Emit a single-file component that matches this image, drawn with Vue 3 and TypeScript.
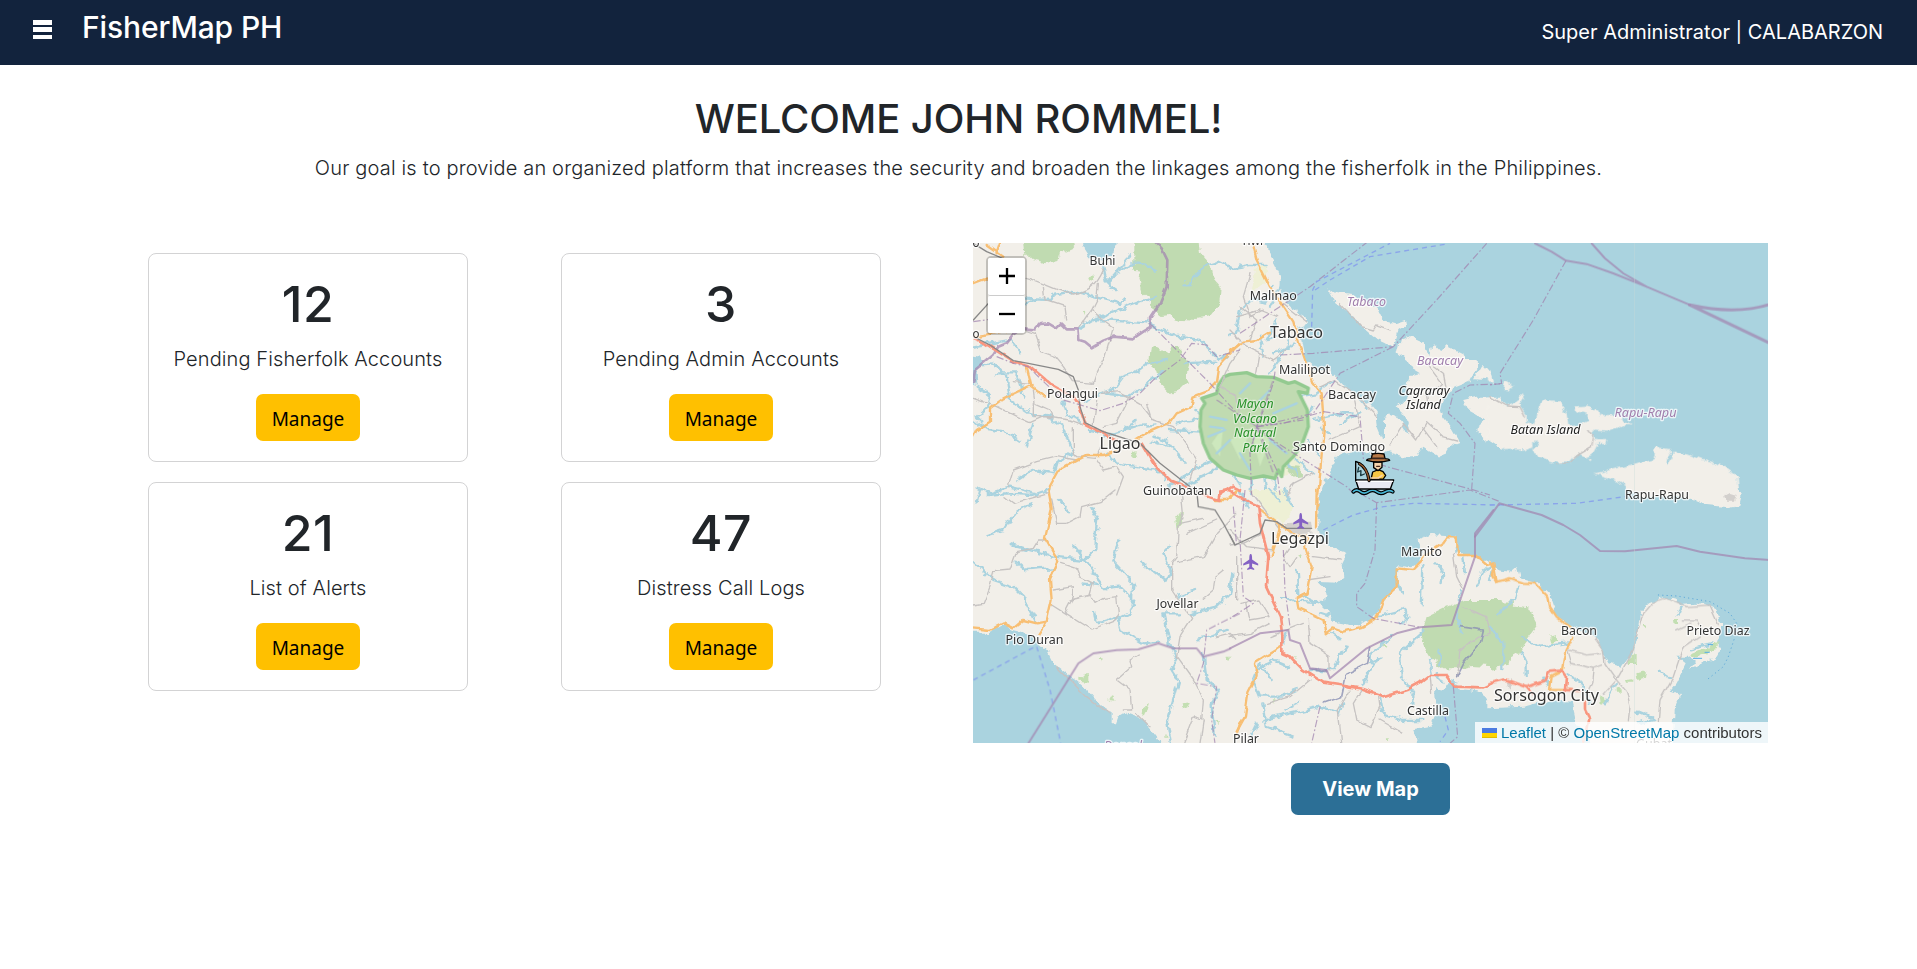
<script setup lang="ts">
interface Stat { count: number; label: string }
interface Feature { kind: string; d: string }
interface Sheet { x: number; y: number; land: string; features: Feature[] }
interface Label { text: string; x: number; y: number; w: number; size: number; tone?: string }

const stats: Stat[] = [
  { count: 12, label: 'Pending Fisherfolk Accounts' },
  { count: 3, label: 'Pending Admin Accounts' },
  { count: 21, label: 'List of Alerts' },
  { count: 47, label: 'Distress Call Logs' },
]

// The map is split in six sheets; path units are a third of a map pixel.
const sheets: Sheet[] = [
  {
    x: 970, y: 240,
    land: 'M0 0H810V770H0Z',
    features: [
      { kind: 'lake', d: 'M338 0H440L438 40 425 52 405 48 400 75 392 52 355 48 342 28ZM0 345 30 350 38 375 20 400 22 435 0 430Z' },
      { kind: 'park', d: 'M162 0H325L305 25 270 40 265 60 225 70 185 60 165 40ZM493 0H685L690 40 730 90 735 120 752 140 748 190 720 225 690 230 680 243 630 240 600 225 575 228 545 205 540 175 515 155 505 120 510 95 493 92ZM540 320 575 330 590 340 605 322 632 320 635 345 655 375 645 410 655 425 625 455 600 460 580 440 570 430 562 390 535 365Z' },
      { kind: 'scrub', d: 'M355 115 368 100 370 115 358 122ZM335 220 343 218 340 230ZM488 645 498 640 502 650 490 653Z' },
      { kind: 'minor', d: 'M165 112C230 130 270 160 310 162 350 155 380 140 400 90M385 130 380 180 365 210 400 240 430 262 405 350 380 400 370 430 310 425 280 380 255 350 215 335 195 280 165 270M220 140 225 180 285 200 290 240M10 475 80 500 140 530 180 548 220 530 300 540 340 555M395 460 450 455 510 490 550 540 610 560 640 600 680 655 660 720M380 480 370 550M190 450 195 490 240 510 245 530 190 530 190 490M130 425 180 430M310 560 310 640 320 650 375 655 390 620M320 660 260 650 200 665 130 690 115 740M380 660 400 690 440 680 460 710 440 765M480 470 440 550 400 560M750 440 800 470 810 540M545 540 530 490M365 210 330 260M810 330 780 370 750 440' },
      { kind: 'river', d: 'M165 190 200 178 240 180 250 165 300 155 350 165 390 175 450 190 465 175M330 265 380 235 430 215 500 190 555 170M400 80 410 130 440 150M410 130 440 95 490 70 540 75 555 95M440 95 470 60 480 40M380 240 470 245 530 250 620 290 690 300 750 360 770 345M640 130 665 130 700 80 750 65 790 85 810 75M10 375 70 370 110 410 120 480 180 520 240 530 280 560 310 640 260 665 250 700 190 690 145 720M75 400 140 400 160 470M10 540 50 570 120 580 155 605M370 470 430 450 460 410 490 400 530 370 590 360M345 485 400 460 480 470 530 430 580 390M280 485 290 520 330 545M360 570 430 580 510 555 560 550M400 590 460 570 500 540M550 590 590 600 610 630 645 665M545 605 610 625M410 640 440 670 490 680 560 690 590 720M20 440 60 465 50 500 20 530 40 550M190 550 170 620M150 340 120 300 10 320M20 740 60 760 120 740 200 760M640 370 740 365M130 170 200 180M670 510 740 545 790 545M620 550 680 540M600 570 690 575' },
      { kind: 'fat', d: 'M600 740 670 690 750 650 790 600M640 740 720 700 800 620' },
      { kind: 'ridge', d: 'M10 425 15 390 70 345 85 320 110 310 130 285 160 265 195 268 210 252 235 250 260 265 275 250 290 265 325 265 328 300 345 305 365 322 400 302 430 290 490 295 520 275 545 260 540 235 570 190 590 140 592 60 575 25 550 0' },
      { kind: 'admin', d: 'M545 255 600 310 720 430 810 530M80 350 130 370 175 380 210 415 280 480 390 512 460 490 510 460 550 420 630 360 665 310 710 315 740 350 810 330M10 245 80 235 160 260' },
      { kind: 'primary', d: 'M810 310 790 330 745 380 738 425 710 455 670 470 665 500 620 520 600 548 540 575 500 600M440 635 400 645 350 645 320 660 265 690 240 735 235 765M170 375 185 440 225 470M185 435 100 475 60 505 60 545 20 570 10 590M50 15 100 50M80 40 90 10M10 130 50 115 70 120M10 290 70 280 120 270' },
      { kind: 'trunk', d: 'M10 295 45 310 130 365 175 375 240 430 310 470 325 490 345 550 440 600M515 610 550 670 600 720 650 740M750 765 790 740 810 750' },
      { kind: 'rail', d: 'M10 10 50 35 110 60M10 240 60 185M10 290 60 315 130 362 175 370 265 388 310 410 325 450 330 500 345 548 400 575 510 610 570 670 660 740' },
    ],
  },
  {
    x: 1230, y: 240,
    land: 'M0 0H106L122 50 135 75 150 105 148 140 165 185 190 208 228 230 235 250 205 262 215 290 225 340 238 370 262 390 300 392 325 415 350 445 378 465 415 488 440 520 443 560 455 590 480 605 490 635 450 645 400 630 340 638 320 650 300 690 285 730 270 770H0ZM292 142 320 160 370 165 440 200 460 240 495 250 525 240 528 255 505 270 500 290 490 320 465 305 430 290 400 265 370 230 340 205 320 190ZM462 545 475 520 500 530 525 570 542 580 520 520 500 500 520 480 535 470 530 440 540 405 570 400 545 385 530 360 500 338 510 300 535 290 575 308 600 345 612 312 632 335 650 315 670 325 700 340 705 360 740 360 742 385 722 425 660 450 640 475 630 500 640 530 670 570 690 605 665 615 650 640 625 650 610 640 580 620 560 648 520 650 485 640 462 600ZM735 415 760 372 785 400 790 420ZM700 480 740 470 815 470V630L770 600 735 570 765 545 740 520 705 500Z',
    features: [
      { kind: 'field', d: 'M75 90 110 70 115 100 90 145 65 155ZM5 640 60 610 120 650 110 690 30 670ZM130 660 210 640 215 690 150 710Z' },
      { kind: 'park', d: 'M160 675 205 680 220 705 190 710Z' },
      { kind: 'minor', d: 'M60 100 40 170 60 230 100 210M0 270 50 320 90 340 80 400M160 190 230 245M30 200 80 240 60 300M330 190 395 260 430 270 440 255 480 270M380 470 440 530M270 440 310 420 370 460 390 560 300 600M590 370 635 430 590 470 595 500M480 615 520 550 560 600 590 545 640 590 680 600M575 560 620 620M250 700 190 730 170 765M20 230 90 210 140 230M90 340 130 360 170 330M600 370 640 400 650 450' },
      { kind: 'river', d: 'M0 85 60 75 110 75M0 285 20 270 30 210 70 175 100 185 125 140M150 140 120 200M140 240 110 300 150 290M90 290 100 350M180 290 160 340 115 400M130 340 200 310M60 430 110 490 160 450M120 440 170 470 200 510M150 530 80 560M160 475 260 460 310 425M250 540 330 520 380 525M330 550 390 520M40 620 70 690 60 765M90 610 130 700 135 765M140 640 200 700M200 660 250 700M240 600 270 650M250 500 210 550M10 690 30 740M100 690 110 765M270 560 300 580M330 400 410 500M30 430 15 510' },
      { kind: 'admin', d: 'M30 280 240 140 420 0M150 345 250 340 490 320 620 180 770 10M490 320 330 400 250 520 80 560M135 395 130 430 105 500 80 560 60 640 65 765M80 560 160 550 280 515 390 530 400 655 470 680 725 748 735 610 690 550 655 520 670 460 720 435 810 432M80 560 140 690 150 765M80 570 350 740 375 765M725 748 780 765' },
      { kind: 'ferry', d: 'M245 260 248 150 260 125 480 10M255 150 300 120 420 50 650 12' },
      { kind: 'primary', d: 'M65 0 80 60 120 140 190 245 210 320 250 430 275 460 282 560 265 765M120 275 80 300 40 305 0 335' },
    ],
  },
  {
    x: 1490, y: 240,
    land: 'M-5 468 30 480 50 500 85 485 95 465 107 468 90 495 110 520 110 552 135 550 152 490 165 478 205 485 230 520 235 557 270 552 297 542 290 525 258 515 257 502 290 500 322 512 325 525 380 525 425 552 400 552 380 565 355 575 310 572 315 600 352 600 350 612 325 612 310 640 285 650 265 640 240 668 200 668 140 650 130 625 145 610 130 600 130 620 100 628 40 630 10 605 -5 600ZM0 385 12 425-10 425ZM45 420 70 438 55 455 40 450ZM295 650 305 660 300 663ZM315 700 380 685 430 672 490 655 500 622 540 628 545 645 530 660 530 678 550 650 550 635 600 645 640 660 700 680 740 710 745 770H440L400 735 370 718Z',
    features: [
      { kind: 'minor', d: 'M0 470 50 498 90 500 105 530M290 572 312 585 305 620 270 640 240 665 200 668' },
      { kind: 'admin', d: 'M228 62 130 240 30 400 35 430 0 435' },
      { kind: 'edge', d: 'M135 10 185 35 228 62 290 72 370 100 470 140 600 195M305 10 345 55 400 100 470 140' },
      { kind: 'wide', d: 'M600 195C690 215 770 215 840 193M600 195 840 310' },
    ],
  },
  {
    x: 970, y: 490,
    land: 'M0-5H815V770H582L540 715 510 680 470 665 445 680 438 700 425 700 425 670 400 655 370 625 340 590 300 558 250 520 230 480 200 450 170 430 130 420 100 405 60 425 55 435 50 425 0 425Z',
    features: [
      { kind: 'scrub', d: 'M612 75 635 72 640 100 620 110ZM325 560 340 562 342 550 355 550 355 575 325 572ZM380 502 392 502 390 512ZM403 628 440 632 430 615 420 632ZM770 500 782 500 782 512 770 510ZM635 640 660 637 655 650 637 655ZM520 655 540 635 530 670 517 675ZM730 690 743 690 743 702ZM583 725 590 740 583 740Z' },
      { kind: 'minor', d: 'M235 10 130 40 105 20M245 30 260 100 290 100 330 80 335 50 390 35 435 0M10 345 40 340 60 290 70 245 120 240 140 185 190 175 205 150 230 150M245 345 285 370 365 420 430 395 445 370 440 320 400 325 375 340 360 315 370 280 330 260 320 235 275 220M250 300 310 290 310 320 285 368M300 330 365 315M635 20 640 70 625 110 620 200 605 220 605 300 625 330 665 385 630 440 620 500 670 570 700 630 695 690 670 680 640 760M620 215 700 200 740 130 800 70M650 130 740 90M630 100 700 85M700 325 730 300 735 260 760 240M505 495 480 510 485 530 440 570 480 600 485 660 460 660M260 530 350 620 420 670M500 670 540 710M740 440 780 430 800 450M700 690 690 760M800 200 800 330' },
      { kind: 'river', d: 'M20 40 30 0M50 15 110 10 190 15 235 0M185 40 130 75 100 120 55 135M365 55 385 90 375 180 345 210 310 165M125 165 180 180 250 200 345 210 385 270 405 295 450 290 490 330 475 370 445 385 455 420 520 460 570 455M140 215 170 240 250 235M335 280 385 285M445 150 430 215 490 280 485 340M520 220 590 275 605 240 580 190 600 170M375 365 380 400 445 380M10 215 70 270 130 290 160 320 195 390M625 320 675 300M580 370 630 370M580 370 600 460 620 510 605 540 625 570 590 700 600 760M790 250 780 310 740 350 660 370M685 445 720 440 770 420M700 490 710 570 745 600 725 650 735 740M270 30 300 70' },
      { kind: 'ferry', d: 'M10 570 195 470M200 470 240 600 272 760' },
      { kind: 'edge', d: 'M175 760 325 520 370 490 440 480 505 478 565 460 610 475 680 475 700 500 760 485 780 476' },
      { kind: 'admin', d: 'M810 370 710 420 700 520 680 580 740 590 725 690 735 760' },
      { kind: 'primary', d: 'M235 0 245 60 225 145 265 215 240 270 245 330 230 395 200 400 160 390 130 415 100 400 60 420 10 415M230 395 205 435M735 30 770 30 800 0M810 700 800 735' },
      { kind: 'trunk', d: 'M700 15 745 30 750 5 780 0' },
      { kind: 'rail', d: 'M680 0 685 50 735 60 760 100 795 165' },
    ],
  },
  {
    x: 1230, y: 490,
    land: 'M0-5H272L262 100 275 160 305 165 350 195 335 225 340 260 320 278 258 275 290 305 285 335 255 335 290 360 310 395 370 405 400 400 430 385 460 335 500 290 505 240 497 228 540 235 575 215 575 180 560 150 600 135 680 140 685 190 730 200 760 210 790 230 815 250V645L780 640 760 610 720 600 690 598 680 575 660 570 640 600 615 595 620 670 605 710 550 720 560 770H0Z',
    features: [
      { kind: 'field', d: 'M50 0H160L190 60 160 100 120 80 90 30Z' },
      { kind: 'urban', d: 'M165 100 240 95 245 130 180 135Z' },
      { kind: 'park', d: 'M575 430 590 380 650 350 700 330 815 330V530L730 525 690 535 640 535 600 505 580 470Z' },
      { kind: 'scrub', d: 'M205 195 218 198 212 210ZM455 465 468 465 462 475ZM190 498 202 500 198 508ZM128 628 140 628 135 638ZM465 745 480 745 475 755Z' },
      { kind: 'minor', d: 'M0 165 40 160 90 135 100 100M30 340 90 330 120 380 60 390 50 340M200 200 180 230 160 200 180 170M235 390 240 460 300 500 300 540M395 600 370 640 380 690 420 710 450 650 445 610M360 600 325 660 335 760M110 640 180 620 240 570M0 440 60 430 120 400M250 200 330 210M670 190 680 260 700 300M230 270 300 260M700 350 770 380 780 430 740 440 690 480 680 560M60 0 150 120M0 120 50 170 130 180M600 550 605 610M120 440 220 400M450 690 520 730' },
      { kind: 'river', d: 'M30 0 50 50M120 0 150 40M160 0 190 50M200 240 205 310 260 335M150 320 200 335 280 340M270 370 360 400M580 230 575 350M615 220 640 250 635 285M700 200 705 250M740 285 760 245 780 230M690 300 680 390 700 430M785 240 780 270M440 380 520 360 535 385 515 400M580 425 510 490 515 560 550 610 550 640M485 440 420 490 430 520 400 580M455 505 420 520M350 470 330 500 310 540 240 540M175 530 130 510 90 540M125 570 90 520 70 570 90 620 150 620 200 600M100 640 110 710 190 740M80 700 60 740M100 690 270 650 330 670 340 640M450 620 460 670 520 690 580 690M620 550 640 580M600 510 605 550M625 480 630 520M170 430 160 460M10 260 0 300M160 660 210 635M500 270 515 310M790 370 810 365M310 430 330 445' },
      { kind: 'bound', d: 'M420 470 410 520 350 550 335 620 280 640M680 560 700 520 750 460 760 420 690 410M240 540 290 545' },
      { kind: 'ferry', d: 'M280 120 370 75 460 50 550 40 810 45M645 680 655 720 630 755' },
      { kind: 'admin', d: 'M390 10 440 38 720 0 810 35M440 38 435 180 405 280 380 310 380 350 430 385 570 412M45 0 30 150 40 320 70 340 0 385M160 180 165 300 180 410M270 650 245 760M670 590 683 740 660 760M10 50 20 170' },
      { kind: 'edge', d: 'M0 475 90 430 175 420 180 450 210 460 240 535 290 540 300 565 410 475 500 430 570 412 665 405 735 200 735 130 790 60' },
      { kind: 'primary', d: 'M260 0 258 110M90 60 150 105 190 130 235 145 225 170 245 230 230 310 200 325 205 355 280 390 290 430 310 415 340 425 400 410 440 385 460 330 500 290 500 235 550 240 575 215 580 200 640 160 650 145 680 145 685 195 735 195 770 225 790 220 800 275M150 110 140 150 125 195M155 470 75 520 80 560 55 610 45 680 20 725' },
      { kind: 'trunk', d: 'M0 0 60 40 85 50 90 100 105 160 115 200 108 290 150 380 157 440 157 490 180 500 220 540 280 578 330 585 400 597 465 620 530 600 570 578 600 555 650 555 675 590 760 592 785 580' },
      { kind: 'rail', d: 'M0 135 15 165 90 130 105 90 140 95 170 115 245 115' },
    ],
  },
  {
    x: 1490, y: 490,
    land: 'M-5 215 5 215 12 240 60 245 80 228 90 265 140 280 180 320 200 380 235 405 320 440 340 490 355 520 395 530 425 490 440 450 450 370 480 340 525 322 560 330 570 345 640 340 680 360 690 400 690 440 680 455 695 475 680 500 640 520 600 537 615 515 590 500 565 500 590 520 560 580 540 605 570 615 555 650 550 720 535 770H310L260 700 245 635 180 630 100 650-5 655ZM430-10H740L752 15 745 45 715 52 650 45 610 28 560 15Z',
    features: [
      { kind: 'park', d: 'M0 332 70 335 75 350 115 355 142 405 90 475 85 490 60 505 55 525 0 537Z' },
      { kind: 'scrub', d: 'M180 440 200 435 205 450 185 460ZM420 495 440 492 440 522 415 522ZM442 550 468 542 465 560 445 567ZM405 570 430 568 430 578 408 578ZM330 620 348 615 350 632 332 642ZM380 592 392 592 392 605 380 605ZM455 402 470 402 468 415ZM555 390 570 390 570 402 557 402ZM600 505 605 490 690 455 665 485Z' },
      { kind: 'urban', d: 'M705 20 720 12 740 18 735 32 710 32ZM50 580 70 570 60 600Z' },
      { kind: 'minor', d: 'M235 480 290 495 335 490M235 485 245 520 310 535 335 525M310 535 305 580 290 610M315 445 340 480 345 520 380 570 410 605 420 650 415 695M380 570 340 615M380 570 430 480 455 380 490 340 530 325 590 350 660 345 685 400M580 390 620 390 640 430M600 400 560 420M640 430 580 470 550 560 510 630 505 695' },
      { kind: 'river', d: 'M85 285 75 330 20 370M0 410 40 460 40 540M95 440 150 470 230 460M90 480 110 520 110 560M230 555 280 580 300 640M440 665 490 685M600 475 665 460M575 350 565 380M380 580 345 640M440 700 490 690M510 545 540 565M160 560 175 590' },
      { kind: 'ferry', d: 'M0 45 260 40 405 20' },
      { kind: 'dots', d: 'M505 315 560 318 660 335 720 370 740 400 735 440 715 500 700 530 650 570' },
      { kind: 'pond', d: 'M610 505H635M645 487H658M655 464H668' },
      { kind: 'edge', d: 'M-45 140 0 80 28 40 155 75 220 105 270 135 330 183 405 184 560 168 630 185 765 205 840 210' },
      { kind: 'primary', d: 'M0 215 12 240 8 255 20 275 60 265 100 278 135 280 175 325 180 350 200 380 245 415M250 440 225 490 215 545 185 560 180 600 240 600' },
      { kind: 'trunk', d: 'M-5 580 45 568 110 592 170 570 180 545 215 542 228 560 225 600 270 602M285 635 285 660 298 685 290 730 275 765M110 592 125 610' },
    ],
  },
]

const labels: Label[] = [
  { text: 'Buhi', x: 1102.5, y: 265, w: 26, size: 12.8 },
  { text: 'o', x: 976, y: 247, w: 7, size: 12.8 },
  { text: 'o', x: 976, y: 338, w: 7, size: 13 },
  { text: 'Polangui', x: 1072.5, y: 397.5, w: 51, size: 12.8 },
  { text: 'Ligao', x: 1120, y: 449, w: 41, size: 15.8 },
  { text: 'Guinobatan', x: 1177.5, y: 494.5, w: 69, size: 12.8 },
  { text: 'Tiwi', x: 1252, y: 244.5, w: 22, size: 12.8 },
  { text: 'Malinao', x: 1273.3, y: 300, w: 47, size: 12.8 },
  { text: 'Tabaco', x: 1296.5, y: 337.5, w: 53, size: 15.8 },
  { text: 'Malilipot', x: 1304.5, y: 374, w: 51, size: 12.8 },
  { text: 'Bacacay', x: 1352, y: 398.5, w: 48, size: 12.8 },
  { text: 'Santo Domingo', x: 1339, y: 450.5, w: 92, size: 12.8 },
  { text: 'Tabaco', x: 1366.5, y: 306, w: 39, size: 12.8, tone: 'muni' },
  { text: 'Bacacay', x: 1440, y: 364.5, w: 46, size: 12.8, tone: 'muni' },
  { text: 'Rapu-Rapu', x: 1645.5, y: 417, w: 62, size: 12.8, tone: 'muni' },
  { text: 'Donsol', x: 1123, y: 750, w: 38, size: 12.8, tone: 'muni' },
  { text: 'Cagraray', x: 1424, y: 394.5, w: 51, size: 12.8, tone: 'isle' },
  { text: 'Island', x: 1423.5, y: 409, w: 35, size: 12.8, tone: 'isle' },
  { text: 'Batan Island', x: 1545.5, y: 434, w: 70, size: 12.8, tone: 'isle' },
  { text: 'Mayon', x: 1255, y: 407.5, w: 37, size: 12.8, tone: 'nature' },
  { text: 'Volcano', x: 1255, y: 422.5, w: 44, size: 12.8, tone: 'nature' },
  { text: 'Natural', x: 1255, y: 437, w: 42, size: 12.8, tone: 'nature' },
  { text: 'Park', x: 1255, y: 452, w: 25, size: 12.8, tone: 'nature' },
  { text: 'Rapu-Rapu', x: 1657, y: 499, w: 64, size: 12.8 },
  { text: 'Legazpi', x: 1300, y: 543.5, w: 58, size: 15.8 },
  { text: 'Manito', x: 1421.5, y: 555.5, w: 41, size: 12.8 },
  { text: 'Jovellar', x: 1177.5, y: 608, w: 42, size: 12.8 },
  { text: 'Pio Duran', x: 1034.5, y: 644, w: 58, size: 12.8 },
  { text: 'Bacon', x: 1579, y: 635, w: 36, size: 12.8 },
  { text: 'Prieto Diaz', x: 1718, y: 634.5, w: 63, size: 12.8 },
  { text: 'Sorsogon City', x: 1546.5, y: 700.5, w: 105, size: 15.8 },
  { text: 'Castilla', x: 1428, y: 715, w: 42, size: 12.8 },
  { text: 'Pilar', x: 1246, y: 743, w: 26, size: 12.8 },
  { text: 'Gubat', x: 1654, y: 748, w: 36, size: 12.8 },
]

const airports = [[1300.7, 521], [1250.7, 562]]
const ground = ['park', 'lake', 'scrub', 'field', 'urban', 'river', 'fat']
const roads = ['minor', 'bound', 'primary', 'trunk', 'ridge']
const lines = ['admin', 'edge', 'wide', 'ferry', 'rail', 'dots', 'pond']
const place = (s: Sheet): string => `translate(${s.x} ${s.y}) scale(.33333)`
const pick = (s: Sheet, kinds: string[]): Feature[] => s.features.filter(f => kinds.includes(f.kind))
</script>

<template>
  <div class="page">
    <header class="topbar">
      <button class="menu" aria-label="Menu"><i></i><i></i><i></i></button>
      <div class="brand">FisherMap PH</div>
      <div class="account">Super Administrator | CALABARZON</div>
    </header>

    <section class="intro">
      <h1>WELCOME JOHN ROMMEL!</h1>
      <p>Our goal is to provide an organized platform that increases the security and broaden the linkages among the fisherfolk in the Philippines.</p>
    </section>

    <main class="content">
      <div class="cards">
        <article v-for="s in stats" :key="s.label" class="card">
          <div class="count">{{ s.count }}</div>
          <div class="label">{{ s.label }}</div>
          <button class="manage">Manage</button>
        </article>
      </div>

      <div class="side">
        <div class="map">
          <svg class="chart" viewBox="973 243 795 500" width="795" height="500">
            <defs>
              <filter id="rough" x="973" y="243" width="795" height="500" filterUnits="userSpaceOnUse" color-interpolation-filters="sRGB">
                <feTurbulence type="fractalNoise" baseFrequency=".11" numOctaves="3" seed="4" />
                <feDisplacementMap in="SourceGraphic" scale="8" xChannelSelector="R" yChannelSelector="G" />
              </filter>
              <filter id="wobble" x="973" y="243" width="795" height="500" filterUnits="userSpaceOnUse" color-interpolation-filters="sRGB">
                <feTurbulence type="fractalNoise" baseFrequency=".09" numOctaves="2" seed="9" />
                <feDisplacementMap in="SourceGraphic" scale="5" xChannelSelector="R" yChannelSelector="G" />
              </filter>
            </defs>
            <rect x="973" y="243" width="795" height="500" fill="#aad3df" />
            <g filter="url(#rough)">
              <g v-for="(s, i) in sheets" :key="i" :transform="place(s)">
                <path class="land" :d="s.land" />
              </g>
              <g v-for="(s, i) in sheets" :key="'w' + i" :transform="place(s)">
                <path v-for="(f, j) in pick(s, ground)" :key="j" :class="f.kind" :d="f.d" />
              </g>
            </g>
            <g transform="translate(1230 240) scale(.33333)">
              <path class="reserve" d="M-18 410 0 403 50 398 80 410 130 412 175 430 195 425 235 445 232 460 205 455 232 510 235 560 215 615 190 650 160 680 155 710 145 690 135 715 100 708 60 715 20 705-20 690-60 655-80 610-90 560-87 510-75 490-85 475-40 460-35 435Z" />
              <path class="reserve-in" d="M-55 610-20 560-30 650ZM0 600 60 570 30 660ZM60 560 120 600 90 680Z" />
              <path class="river" d="M-60 530-10 540M-60 560-20 565M-65 590-15 570M-40 640 0 600M30 640 60 690M60 430 30 460M120 450 90 480M200 490 130 520M170 640 120 600" />
              <path class="admin" d="M-40 480 80 560 60 640M80 560 135 405M80 560 220 540M80 560 170 640M80 560 130 700" />
            </g>
            <g filter="url(#wobble)">
              <g v-for="(s, i) in sheets" :key="'m' + i" :transform="place(s)">
                <path v-for="(f, j) in pick(s, roads)" :key="j" :class="f.kind" :d="f.d" />
              </g>
            </g>
            <g v-for="(s, i) in sheets" :key="'l' + i" :transform="place(s)">
              <path v-for="(f, j) in pick(s, lines)" :key="j" :class="f.kind" :d="f.d" />
            </g>
            <path d="M1634.5 243V743" stroke="#c9dcd8" stroke-width=".6" opacity=".6" />
            <g v-for="(a, i) in airports" :key="'a' + i" :transform="`translate(${a[0]} ${a[1]})`">
              <path d="M0-8C1.2-8 1.4-6 1.4-2.6L7.5 1.7V3.5L1.4 1.6V5L3.5 6.8V8L0 7-3.5 8V6.8L-1.4 5V1.6L-7.5 3.5V1.7L-1.4-2.6C-1.4-6-1.2-8 0-8Z" fill="#8461c4" />
            </g>
            <g class="names">
              <text v-for="(l, i) in labels" :key="'t' + i" :x="l.x" :y="l.y" :font-size="l.size" :textLength="l.w" lengthAdjust="spacingAndGlyphs" :class="l.tone">{{ l.text }}</text>
            </g>
            <g transform="translate(1230 240) scale(.33333)">
              <path d="M370 755Q380 746 391 755T415 755T440 755T465 756T488 755" fill="none" stroke="#000" stroke-width="12" />
              <path d="M370 755Q380 746 391 755T415 755T440 755T465 756T488 755" fill="none" stroke="#48b8d8" stroke-width="5" />
              <path d="M377 720H491L481 747H386Z" fill="#e9e9f2" stroke="#000" stroke-width="4" />
              <path d="M380 724H488" stroke="#fff" stroke-width="4" />
              <path d="M423 718 428 696 445 689 459 695 467 706 460 717Z" fill="#f7c744" stroke="#000" stroke-width="4" />
              <path d="M431 666V683L444 692 456 682V666Z" fill="#f6d4ac" stroke="#000" stroke-width="4" />
              <path d="M410 661Q412 656 424 656L427 642Q444 638 462 642L465 656Q476 656 479 661Q444 671 410 661Z" fill="#b87947" stroke="#000" stroke-width="4" />
              <path d="M426 655H462" stroke="#38251b" stroke-width="5" />
              <path d="M377 664V720M377 664Q409 674 420 721" fill="none" stroke="#000" stroke-width="4" />
              <path d="M388 671Q412 684 417 722" fill="none" stroke="#000" stroke-width="9" />
              <path d="M388 671Q412 684 417 722" fill="none" stroke="#985c31" stroke-width="4" />
              <path d="M386 682 383 696 393 692 392 707 403 702" fill="none" stroke="#1b3b42" stroke-width="4" />
              <path d="M423 714H445L456 706" fill="none" stroke="#f6d4ac" stroke-width="5" />
              <path d="M440 679H449" stroke="#4b2c20" stroke-width="4" />
            </g>
          </svg>
          <div class="zoom">
            <button aria-label="Zoom in"><svg width="16" height="16"><path d="M0 8H16M8 0V16" stroke="#000" stroke-width="2.3" /></svg></button>
            <button aria-label="Zoom out"><svg width="16" height="16"><path d="M0 8H16" stroke="#000" stroke-width="2.3" /></svg></button>
          </div>
          <div class="credit">
            <svg width="15" height="10"><path fill="#4c7be1" d="M0 0h15v5H0z" /><path fill="#ffd500" d="M0 5h15v4H0z" /><path fill="#e0bc00" d="M0 9h15v1H0z" /></svg>
            <span><a>Leaflet</a> | © <a>OpenStreetMap</a> contributors</span>
          </div>
        </div>
        <button class="view">View Map</button>
      </div>
    </main>
  </div>
</template>

<style>
body { margin: 0; background: #fff; }
</style>

<style scoped>
.page { width: 1917px; height: 969px; overflow: hidden; font-family: Inter, "Noto Sans", sans-serif; color: #212529; font-size: 20px; line-height: 30px; }
button { border: 0; padding: 0; font: inherit; }
.topbar { height: 65px; background: #12233d; color: #fff; display: flex; align-items: flex-start; box-sizing: border-box; padding: 0 34px 0 33px; }
.menu { width: 19px; height: 19px; margin-top: 20px; background: none; display: flex; flex-direction: column; justify-content: space-between; }
.menu i { height: 4.5px; width: 19px; background: #fff; }
.brand { margin: 8px 0 0 30px; font-size: 30px; line-height: 38px; font-weight: 500; letter-spacing: -.12px; white-space: nowrap; }
.account { margin: 17px 0 0 auto; white-space: nowrap; }
.intro { text-align: center; padding-top: 30px; }
.intro h1 { margin: 0; font-size: 40px; line-height: 48px; font-weight: 450; letter-spacing: -.12px; }
.intro p { margin: 10px 0 0; font-weight: 350; letter-spacing: .17px; white-space: nowrap; }
.content { display: flex; padding: 60px 0 0 148px; }
.cards { display: grid; grid-template-columns: 320px 320px; column-gap: 93px; row-gap: 20px; align-content: start; padding-top: 10px; width: 825px; box-sizing: border-box; }
.card { height: 209px; box-sizing: border-box; border: 1px solid #d3d3d4; border-radius: 8px; display: flex; flex-direction: column; align-items: center; padding-top: 20px; }
.count { font-size: 50px; line-height: 60px; font-weight: 460; letter-spacing: .5px; }
.label { margin-top: 10px; font-weight: 350; letter-spacing: .11px; white-space: nowrap; }
.manage { margin-top: 20px; width: 104px; height: 47px; border-radius: 7px; background: #ffc000; color: #000; font-family: "Noto Sans", sans-serif; font-size: 19px; font-weight: 365; padding-top: 3px; }
.side { display: flex; flex-direction: column; align-items: center; width: 795px; }
.map { position: relative; width: 795px; height: 500px; overflow: hidden; }
.chart { display: block; }
.view { margin-top: 20px; width: 159px; height: 52px; border-radius: 7px; background: #2c6f96; color: #fff; font-weight: 700; }
.zoom { position: absolute; left: 13px; top: 13px; border: 2px solid rgba(0, 0, 0, .2); border-radius: 5px; background-clip: padding-box; }
.zoom button { display: flex; align-items: center; justify-content: center; width: 37px; height: 37.5px; background: #fff; border-radius: 2px; }
.zoom button:first-child { border-bottom: 1px solid #ccc; box-sizing: border-box; }
.credit { position: absolute; right: 0; bottom: 0; height: 21px; width: 293px; box-sizing: border-box; background: rgba(255, 255, 255, .8); display: flex; align-items: center; padding: 0 6px 0 7px; gap: 4px; color: #333; font: 15px/21px "Liberation Sans", Arial, sans-serif; white-space: nowrap; }
.credit a { color: #0078a8; }
.chart path { stroke-linejoin: round; stroke-linecap: round; }
.land { fill: #f2efe9; }
.lake { fill: #aad3df; }
.park { fill: #c0dbb1; }
.scrub { fill: #c3dfb2; }
.field { fill: #eef0d5; }
.urban { fill: #d3d0cd; }
.river, .fat, .minor, .primary, .trunk, .rail, .edge, .ridge, .wide, .admin, .ferry, .bound, .dots, .pond { fill: none; }
.river { stroke: #aad3df; stroke-width: 7; }
.fat { stroke: #aad3df; stroke-width: 9; }
.minor { stroke: #c6c3c2; stroke-width: 4; }
.primary { stroke: #f8bf74; stroke-width: 7; }
.trunk { stroke: #f9967f; stroke-width: 8; }
.rail { stroke: #888; stroke-width: 4; }
.edge { stroke: #a285b0; stroke-width: 6; opacity: .72; }
.ridge { stroke: #a285b0; stroke-width: 8; opacity: .72; }
.wide { stroke: #a285b0; stroke-width: 9; opacity: .72; }
.bound { stroke: #8b91b4; stroke-width: 5; opacity: .8; }
.chart .admin { stroke: #a285b0; stroke-width: 3.5; stroke-dasharray: 22 7 5 7; stroke-linecap: butt; opacity: .75; }
.chart .ferry { stroke: #8ba5ea; stroke-width: 4; stroke-dasharray: 15 12; stroke-linecap: butt; }
.dots { stroke: #5aa6d8; stroke-width: 3; stroke-dasharray: 1 12; }
.pond { stroke: #56aee6; stroke-width: 3; }
.reserve { fill: #c0dbb1; stroke: #93ca90; stroke-width: 10; }
.reserve-in { fill: #cde8bd; }
.names text { font-family: "Noto Sans", sans-serif; font-weight: 450; text-anchor: middle; fill: #333; stroke: #fff; stroke-opacity: .75; stroke-width: 2.6px; stroke-linejoin: round; paint-order: stroke; }
.names .muni { fill: #a17fad; font-style: italic; }
.names .isle { fill: #222; font-style: italic; }
.names .nature { fill: #269028; font-style: italic; stroke-opacity: .4; }
</style>
